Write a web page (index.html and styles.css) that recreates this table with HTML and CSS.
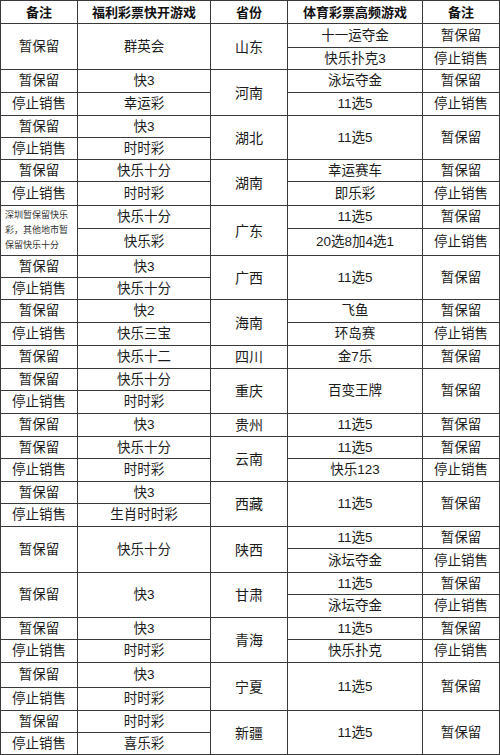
FILE: index.html
```html
<!DOCTYPE html>
<html lang="zh-CN">
<head>
<meta charset="utf-8">
<title>彩票游戏</title>
<link rel="stylesheet" href="styles.css">
</head>
<body>
<div class="sheet">
  <div class="c hd">备注</div><div class="c hd">福利彩票快开游戏</div><div class="c hd">省份</div><div class="c hd">体育彩票高频游戏</div><div class="c hd">备注</div>

  <div class="c s2">暂保留</div><div class="c s2">群英会</div><div class="c s2 pv">山东</div><div class="c">十一运夺金</div><div class="c">暂保留</div>
  <div class="c">快乐扑克3</div><div class="c">停止销售</div>

  <div class="c">暂保留</div><div class="c">快3</div><div class="c s2 pv">河南</div><div class="c">泳坛夺金</div><div class="c">暂保留</div>
  <div class="c">停止销售</div><div class="c">幸运彩</div><div class="c">11选5</div><div class="c">停止销售</div>

  <div class="c">暂保留</div><div class="c">快3</div><div class="c s2 pv">湖北</div><div class="c s2">11选5</div><div class="c s2">暂保留</div>
  <div class="c">停止销售</div><div class="c">时时彩</div>

  <div class="c">暂保留</div><div class="c">快乐十分</div><div class="c s2 pv">湖南</div><div class="c">幸运赛车</div><div class="c">暂保留</div>
  <div class="c">停止销售</div><div class="c">时时彩</div><div class="c">即乐彩</div><div class="c">停止销售</div>

  <div class="c s2 note">深圳暂保留快乐彩，其他地市暂保留快乐十分</div><div class="c">快乐十分</div><div class="c s2 pv">广东</div><div class="c">11选5</div><div class="c">暂保留</div>
  <div class="c">快乐彩</div><div class="c">20选8加4选1</div><div class="c">停止销售</div>

  <div class="c">暂保留</div><div class="c">快3</div><div class="c s2 pv">广西</div><div class="c s2">11选5</div><div class="c s2">暂保留</div>
  <div class="c">停止销售</div><div class="c">快乐十分</div>

  <div class="c">暂保留</div><div class="c">快2</div><div class="c s2 pv">海南</div><div class="c">飞鱼</div><div class="c">暂保留</div>
  <div class="c">停止销售</div><div class="c">快乐三宝</div><div class="c">环岛赛</div><div class="c">停止销售</div>

  <div class="c">暂保留</div><div class="c">快乐十二</div><div class="c pv">四川</div><div class="c">金7乐</div><div class="c">暂保留</div>

  <div class="c">暂保留</div><div class="c">快乐十分</div><div class="c s2 pv">重庆</div><div class="c s2">百变王牌</div><div class="c s2">暂保留</div>
  <div class="c">停止销售</div><div class="c">时时彩</div>

  <div class="c">暂保留</div><div class="c">快3</div><div class="c pv">贵州</div><div class="c">11选5</div><div class="c">暂保留</div>

  <div class="c">暂保留</div><div class="c">快乐十分</div><div class="c s2 pv">云南</div><div class="c">11选5</div><div class="c">暂保留</div>
  <div class="c">停止销售</div><div class="c">时时彩</div><div class="c">快乐123</div><div class="c">停止销售</div>

  <div class="c">暂保留</div><div class="c">快3</div><div class="c s2 pv">西藏</div><div class="c s2">11选5</div><div class="c s2">暂保留</div>
  <div class="c">停止销售</div><div class="c">生肖时时彩</div>

  <div class="c s2">暂保留</div><div class="c s2">快乐十分</div><div class="c s2 pv">陕西</div><div class="c">11选5</div><div class="c">暂保留</div>
  <div class="c">泳坛夺金</div><div class="c">停止销售</div>

  <div class="c s2">暂保留</div><div class="c s2">快3</div><div class="c s2 pv">甘肃</div><div class="c">11选5</div><div class="c">暂保留</div>
  <div class="c">泳坛夺金</div><div class="c">停止销售</div>

  <div class="c">暂保留</div><div class="c">快3</div><div class="c s2 pv">青海</div><div class="c">11选5</div><div class="c">暂保留</div>
  <div class="c">停止销售</div><div class="c">时时彩</div><div class="c">快乐扑克</div><div class="c">停止销售</div>

  <div class="c">暂保留</div><div class="c">快3</div><div class="c s2 pv">宁夏</div><div class="c s2">11选5</div><div class="c s2">暂保留</div>
  <div class="c">停止销售</div><div class="c">时时彩</div>

  <div class="c">暂保留</div><div class="c">时时彩</div><div class="c s2 pv">新疆</div><div class="c s2">11选5</div><div class="c s2">暂保留</div>
  <div class="c">停止销售</div><div class="c">喜乐彩</div>
</div>
</body>
</html>
```

FILE: styles.css
```css
html, body {
  margin: 0;
  padding: 0;
  background: #ffffff;
}

body {
  font-family: "Liberation Sans", "Noto Sans CJK SC", sans-serif;
  color: #1c1c1c;
}

.sheet {
  width: 500px;
  box-sizing: border-box;
  padding: 1px;
  background: #3a3a3a;
  display: grid;
  gap: 1px;
  grid-template-columns: 76px 132px 76px 134px 76px;
  grid-template-rows:
    22px
    23px 21px
    22px 22px
    21px 21px
    21px 23px
    22px 26px
    21px 21px
    22px 22px
    22px
    21px 22px
    22px
    21px 22px
    21px 22px
    21px 23px
    21px 22px
    21px 22px
    24px 22px
    21px 21px;
}

.c {
  background: #ffffff;
  display: flex;
  align-items: center;
  justify-content: center;
  text-align: center;
  font-size: 13.5px;
  line-height: 1;
  white-space: nowrap;
}

.s2 {
  grid-row: span 2;
}

.hd {
  font-size: 13px;
  font-weight: bold;
  color: #111111;
}

.pv {
  font-size: 14px;
}

.note {
  white-space: normal;
  font-size: 9px;
  line-height: 15px;
  padding: 0 4px;
  text-align: left;
  color: #333333;
}
```
